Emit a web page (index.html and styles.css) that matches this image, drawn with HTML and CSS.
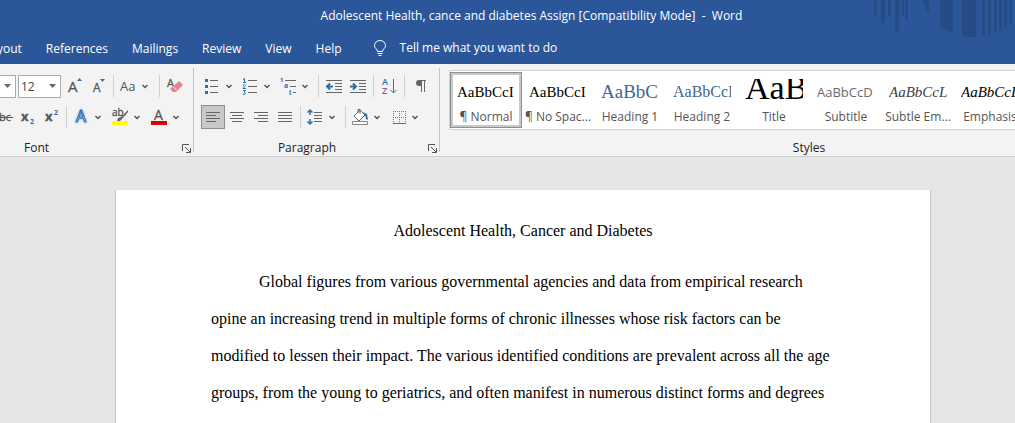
FILE: index.html
```html
<!DOCTYPE html>
<html lang="en">
<head>
  <meta charset="UTF-8">
  <meta name="viewport" content="width=device-width, initial-scale=1.0">
  <title>Adolescent Health, cance and diabetes Assign - Word</title>
  <link rel="stylesheet" href="styles.css">
</head>
<body>
  <header class="header">
    <svg class="header-art" width="144" height="40" viewBox="0 0 144 40" aria-hidden="true">
      <path d="M3 0h3v16H3zM10 0h4v23h-4zM17 0h3v16h-3zM24 0h4v31h-4zM31 0h2v16h-2zM34 0h3v20h-3z"/>
      <path d="M52 0h6v13q-4-5-6-13zM69 0h13v32q-8-1-13-6zM91 0h14v37h-10l-4-2z"/>
      <path d="M111 0h3v37h-3zM117 0h3v35h-3zM123 0h3v33h-3zM128 0h3v31h-3zM133 0h3v28h-3zM138 0h3v24h-3z"/>
    </svg>
    <div class="title">Adolescent Health, cance and diabetes Assign [Compatibility Mode]&nbsp; -&nbsp; Word</div>
    <nav class="tabs">
      <a href="#">Layout</a>
      <a href="#">References</a>
      <a href="#">Mailings</a>
      <a href="#">Review</a>
      <a href="#">View</a>
      <a href="#">Help</a>
      <a href="#" class="tell-me">
        <svg width="12" height="17" viewBox="0 0 12 17" fill="none" stroke="#fff"><path d="M3.5 11.5c0-2.500-3-3-3-6a5.500 5 0 0 1 11 0c0 3-3 3.500-3 6zM3.500 13.500h5M4.500 15.500h3"/></svg>
        Tell me what you want to do
      </a>
    </nav>
  </header>

  <main>
    <div class="ribbon">
      <section class="group font">
        <div class="tools">
          <div class="tool-row">
            <select class="font-name" aria-label="Font"><option>Times New</option></select>
            <select class="font-size" aria-label="Font size"><option>12</option></select>
            <button class="btn" aria-label="Increase font size">
              <svg width="20" height="20" viewBox="0 0 20 20"><text x="4" y="16" font-size="15" class="letter">A</text><path class="blue-fill" d="M13 5l2.500-3L18 5z"/></svg>
            </button>
            <button class="btn" aria-label="Decrease font size">
              <svg width="20" height="20" viewBox="0 0 20 20"><text x="5" y="16" font-size="12" class="letter">A</text><path class="blue-fill" d="M12 3h5l-2.500 3z"/></svg>
            </button>
            <span class="sep"></span>
            <button class="btn drop" aria-label="Change case">
              <svg width="18" height="20" viewBox="0 0 18 20"><text x="1" y="15" font-size="13" class="grey-fill">Aa</text></svg>
              <svg class="chevron" viewBox="0 0 8 5"><path d="M1.500 1L4 3.500 6.500 1"/></svg>
            </button>
            <span class="sep"></span>
            <button class="btn" aria-label="Clear formatting">
              <svg width="20" height="20" viewBox="0 0 20 20"><text x="2" y="11" font-size="11" class="letter">A</text><path fill="#e8808f" d="M14 5l4 4-7 7H8l-3-3z"/><path d="M8 10.500l4 4" stroke="#f3f3f3"/></svg>
            </button>
          </div>
          <div class="tool-row">
            <button class="btn" aria-label="Strikethrough">
              <svg width="22" height="20" viewBox="0 0 22 20"><text x="1" y="14" font-size="11" class="letter">abc</text><path d="M0 10.500h21" stroke="#555"/></svg>
            </button>
            <button class="btn" aria-label="Subscript">
              <svg width="20" height="20" viewBox="0 0 20 20"><text x="4" y="14" font-size="13" class="letter bold">x</text><text x="13" y="17" font-size="7" class="blue-fill bold">2</text></svg>
            </button>
            <button class="btn" aria-label="Superscript">
              <svg width="20" height="20" viewBox="0 0 20 20"><text x="4" y="14" font-size="13" class="letter bold">x</text><text x="13" y="8" font-size="7" class="blue-fill bold">2</text></svg>
            </button>
            <span class="sep"></span>
            <button class="btn drop" aria-label="Text effects">
              <svg width="18" height="20" viewBox="0 0 18 20"><text x="4" y="15" font-size="16" class="effect">A</text></svg>
              <svg class="chevron" viewBox="0 0 8 5"><path d="M1.500 1L4 3.500 6.500 1"/></svg>
            </button>
            <button class="btn drop" aria-label="Text highlight colour">
              <svg width="18" height="20" viewBox="0 0 18 20"><path d="M1 14h16v4H1z" fill="#ff0"/><text x="1" y="9" font-size="10" class="letter">ab</text><path d="M17 3l-7 7-3 1-1 3h3l2-2 6-7z" fill="#666"/></svg>
              <svg class="chevron" viewBox="0 0 8 5"><path d="M1.500 1L4 3.500 6.500 1"/></svg>
            </button>
            <button class="btn drop" aria-label="Font colour">
              <svg width="18" height="20" viewBox="0 0 18 20"><text x="4" y="13" font-size="14" class="letter">A</text><path d="M1 14h16v4H1z" fill="#e00000"/></svg>
              <svg class="chevron" viewBox="0 0 8 5"><path d="M1.500 1L4 3.500 6.500 1"/></svg>
            </button>
          </div>
        </div>
        <div class="group-footer">
          <span class="group-name">Font</span>
          <button class="launcher" aria-label="Font settings"><svg width="9" height="9" viewBox="0 0 9 9"><path d="M.5 7V.5H7M3 3l5 5M8.500 4v4.500H4"/></svg></button>
        </div>
      </section>

      <section class="group paragraph">
        <div class="tools">
          <div class="tool-row">
            <button class="btn drop" aria-label="Bullets">
              <svg width="18" height="20" viewBox="0 0 18 20"><path class="blue-fill" d="M2 3h3v3H2zM2 9h3v3H2zM2 15h3v3H2z"/><path class="line" d="M7 4.500h8M7 10.500h8M7 16.500h8"/></svg>
              <svg class="chevron" viewBox="0 0 8 5"><path d="M1.500 1L4 3.500 6.500 1"/></svg>
            </button>
            <button class="btn drop" aria-label="Numbering">
              <svg width="18" height="20" viewBox="0 0 18 20"><path class="digit" d="M2 3.500l1.500-1V7M2 6.500h3M2 9.500L3.500 8.500l1 1L2 12.500h3M2 14.500h2.500L3 16l1.500 1-1 1.500H2"/><path class="line" d="M7 4.500h9M7 10.500h9M7 16.500h9"/></svg>
              <svg class="chevron" viewBox="0 0 8 5"><path d="M1.500 1L4 3.500 6.500 1"/></svg>
            </button>
            <button class="btn drop" aria-label="Multilevel list">
              <svg width="18" height="20" viewBox="0 0 18 20"><text x="1" y="6" font-size="6" class="blue-fill bold">1</text><text x="5" y="12" font-size="7" class="blue-fill bold">a</text><text x="10" y="19" font-size="7" class="blue-fill bold">i</text><path class="line" d="M6 4.500h11M11 10.500h6M14 16.500h3"/></svg>
              <svg class="chevron" viewBox="0 0 8 5"><path d="M1.500 1L4 3.500 6.500 1"/></svg>
            </button>
            <span class="sep"></span>
            <button class="btn" aria-label="Decrease indent">
              <svg width="18" height="20" viewBox="0 0 18 20"><path class="line" d="M1 4.500h16M10 7.500h7M10 10.500h7M10 13.500h7M1 16.500h16"/><path d="M8 10.500H2M5 7.500l-3 3 3 3" fill="none" stroke="#2f6fa8" stroke-width="2"/></svg>
            </button>
            <button class="btn" aria-label="Increase indent">
              <svg width="18" height="20" viewBox="0 0 18 20"><path class="line" d="M1 4.500h16M10 7.500h7M10 10.500h7M10 13.500h7M1 16.500h16"/><path d="M1 10.500h6M4 7.500l3 3-3 3" fill="none" stroke="#2f6fa8" stroke-width="2"/></svg>
            </button>
            <span class="sep"></span>
            <button class="btn" aria-label="Sort">
              <svg width="18" height="20" viewBox="0 0 18 20"><text x="2" y="9" font-size="9" class="sort-a">A</text><text x="2" y="18" font-size="9" class="sort-z">Z</text><path class="line" fill="none" d="M13.500 3v14M10.500 14l3 3 3-3"/></svg>
            </button>
            <span class="sep"></span>
            <button class="btn" aria-label="Show paragraph marks">
              <svg width="18" height="20" viewBox="0 0 18 20"><path d="M8 4h7v1h-1v11h-1V5h-2v11h-1v-6H8a3 3 0 0 1 0-6z" fill="#666"/></svg>
            </button>
          </div>
          <div class="tool-row">
            <button class="btn selected" aria-label="Align left">
              <svg width="18" height="20" viewBox="0 0 18 20"><path class="line" d="M2 5.500h14M2 8.500h10M2 11.500h14M2 14.500h10"/></svg>
            </button>
            <button class="btn" aria-label="Centre">
              <svg width="18" height="20" viewBox="0 0 18 20"><path class="line" d="M2 5.500h14M4 8.500h10M2 11.500h14M4 14.500h10"/></svg>
            </button>
            <button class="btn" aria-label="Align right">
              <svg width="18" height="20" viewBox="0 0 18 20"><path class="line" d="M2 5.500h14M6 8.500h10M2 11.500h14M6 14.500h10"/></svg>
            </button>
            <button class="btn" aria-label="Justify">
              <svg width="18" height="20" viewBox="0 0 18 20"><path class="line" d="M2 5.500h14M2 8.500h14M2 11.500h14M2 14.500h14"/></svg>
            </button>
            <span class="sep"></span>
            <button class="btn drop" aria-label="Line spacing">
              <svg width="18" height="20" viewBox="0 0 18 20"><path d="M4 3v5M1.500 5.500L4 3l2.500 2.500M4 17v-5M1.500 14.500L4 17l2.500-2.500" fill="none" stroke="#2f6fa8" stroke-width="1.500"/><path class="line" d="M8 5.500h8M8 8.500h8M8 11.500h8M8 14.500h8"/></svg>
              <svg class="chevron" viewBox="0 0 8 5"><path d="M1.500 1L4 3.500 6.500 1"/></svg>
            </button>
            <span class="sep"></span>
            <button class="btn drop" aria-label="Shading">
              <svg width="18" height="20" viewBox="0 0 18 20"><path d="M3 9l6-6 5 5-6 6zM7 6V2.500h2V7" fill="#fff" stroke="#666"/><path class="blue-fill" d="M12 5l4 2 1 6-2-1-1-4z"/><path d="M1.500 14.500h15v3h-15z" fill="#fff" stroke="#888"/></svg>
              <svg class="chevron" viewBox="0 0 8 5"><path d="M1.500 1L4 3.500 6.500 1"/></svg>
            </button>
            <button class="btn drop" aria-label="Borders">
              <svg width="18" height="20" viewBox="0 0 18 20"><path d="M4 4.500h13M4 10.500h13M4.500 4v12M10.500 4v12M16.500 4v12" stroke="#777" stroke-dasharray="1 1"/><path class="line" d="M4 16.500h13"/></svg>
              <svg class="chevron" viewBox="0 0 8 5"><path d="M1.500 1L4 3.500 6.500 1"/></svg>
            </button>
          </div>
        </div>
        <div class="group-footer">
          <span class="group-name">Paragraph</span>
          <button class="launcher" aria-label="Paragraph settings"><svg width="9" height="9" viewBox="0 0 9 9"><path d="M.5 7V.5H7M3 3l5 5M8.500 4v4.500H4"/></svg></button>
        </div>
      </section>

      <section class="group styles">
        <div class="gallery">
          <button class="style active"><span class="preview">AaBbCcI</span><span class="style-name">¶ Normal</span></button>
          <button class="style"><span class="preview">AaBbCcI</span><span class="style-name">¶ No Spac...</span></button>
          <button class="style"><span class="preview heading1">AaBbC</span><span class="style-name">Heading 1</span></button>
          <button class="style"><span class="preview heading2">AaBbCcI</span><span class="style-name">Heading 2</span></button>
          <button class="style"><span class="preview title-style">AaB</span><span class="style-name">Title</span></button>
          <button class="style"><span class="preview subtitle">AaBbCcD</span><span class="style-name">Subtitle</span></button>
          <button class="style"><span class="preview subtle">AaBbCcL</span><span class="style-name">Subtle Em...</span></button>
          <button class="style"><span class="preview emphasis">AaBbCcL</span><span class="style-name">Emphasis</span></button>
        </div>
        <div class="group-footer">
          <span class="group-name">Styles</span>
          <span class="launcher"></span>
        </div>
      </section>
    </div>

    <div class="workspace">
      <article class="page">
        <h1>Adolescent Health, Cancer and Diabetes</h1>
        <p>Global figures from various governmental agencies and data from empirical research opine an increasing trend in multiple forms of chronic illnesses whose risk factors can be modified to lessen their impact. The various identified conditions are prevalent across all the age groups, from the young to geriatrics, and often manifest in numerous distinct forms and degrees</p>
      </article>
    </div>
  </main>
</body>
</html>
```
FILE: styles.css
```css
* {
  box-sizing: border-box;
}
body {
  margin: 0;
  min-height: 100vh;
  display: flex;
  flex-direction: column;
  background-color: #e6e6e6;
  font-family: "Open Sans", "Noto Sans", sans-serif;
  font-size: 12px;
  color: #222;
}
main {
  flex: 1;
  display: flex;
  flex-direction: column;
}
button, select {
  font-family: inherit;
  font-size: 12px;
  color: #444;
}
svg {
  display: block;
  flex: none;
}

/* title bar and tabs */
.header {
  position: relative;
  background-color: #2b579a;
  color: #fff;
  overflow: hidden;
}
.header-art {
  position: absolute;
  top: 0;
  right: 0;
  fill: #264c85;
}
.title {
  height: 32px;
  line-height: 32px;
  padding-left: 48px;
  text-align: center;
  white-space: nowrap;
}
.tabs {
  display: flex;
  gap: 24px;
  height: 32px;
  margin-left: -16px;
  line-height: 34px;
  white-space: nowrap;
}
.tabs a {
  color: #fff;
  text-decoration: none;
}
.tabs .tell-me {
  display: flex;
  align-items: center;
  gap: 14px;
  margin-left: 8px;
}

/* ribbon */
.ribbon {
  display: flex;
  padding-top: 4px;
  background-color: #f3f3f3;
  border-bottom: 1px solid #cfcfcf;
  overflow: hidden;
}
.group {
  flex: none;
  display: flex;
  flex-direction: column;
  justify-content: space-between;
  height: 88px;
  background: linear-gradient(#c4c4c4, #c4c4c4) no-repeat right top / 1px 84px;
}
.font {
  width: 295px;
  margin-left: -101px;
}
.paragraph {
  width: 246px;
}
.styles {
  width: 758px;
}
.tools {
  display: flex;
  flex-direction: column;
  gap: 7px;
  padding: 6px 7px 0;
}
.font .tool-row {
  justify-content: flex-end;
}
.tool-row {
  display: flex;
  align-items: center;
  height: 24px;
}
.btn {
  display: flex;
  align-items: center;
  justify-content: center;
  flex: none;
  width: 24px;
  height: 24px;
  padding: 0;
  border: none;
  background: none;
}
.btn.drop {
  width: 39px;
  gap: 4px;
  justify-content: flex-start;
  padding-left: 2px;
}
.paragraph .btn.drop {
  width: 38px;
}
.btn.selected {
  background-color: #c8c8c8;
  border: 1px solid #8f8f8f;
}
.chevron {
  width: 8px;
  height: 5px;
  fill: none;
  stroke: #555;
  stroke-width: 1.5px;
}
.sep {
  width: 1px;
  height: 22px;
  margin: 0 3px;
  background-color: #d0d0d0;
}
select {
  appearance: none;
  flex: none;
  height: 23px;
  padding: 0 2px;
  border: 1px solid #ababab;
  border-radius: 0;
  background: #fff url("data:image/svg+xml,%3Csvg xmlns='http://www.w3.org/2000/svg' width='7' height='4'%3E%3Cpath d='M0 0h7L3.500 4z' fill='%23666'/%3E%3C/svg%3E") no-repeat right 4px center;
}
.font-name {
  width: 104px;
  margin-right: 2px;
}
.font-size {
  width: 43px;
  margin-right: 1px;
}
.letter {
  fill: #555;
  stroke: #555;
  stroke-width: 0.3px;
}
.effect {
  fill: #fff;
  stroke: #3a72b0;
  filter: drop-shadow(0 0 1px #6fa8dc);
}
.grey-fill {
  fill: #555;
}
.blue-fill {
  fill: #2f6fa8;
}
.sort-a {
  fill: #2f6fa8;
  font-weight: 600;
}
.sort-z {
  fill: #8a55b5;
  font-weight: 600;
}
.digit {
  fill: none;
  stroke: #2f6fa8;
}
.bold {
  font-weight: bold;
}
.line {
  stroke: #666;
}
.group-footer {
  display: flex;
  align-items: center;
  height: 16px;
}
.group-name {
  flex: 1;
  line-height: 16px;
  text-align: center;
}
.launcher {
  width: 20px;
  padding: 0 0 0 8px;
  border: none;
  background: none;
}
.launcher svg {
  fill: none;
  stroke: #555;
}

/* styles gallery */
.gallery {
  display: flex;
  height: 60px;
  margin: 2px 20px 0 9px;
  border: 1px solid #d0d0d0;
  background-color: #fff;
}
.style {
  flex: none;
  display: flex;
  flex-direction: column;
  align-items: center;
  justify-content: flex-start;
  width: 72px;
  padding: 8px 7px 0;
  border: none;
  background: none;
}
.style.active {
  height: 56px;
  margin-top: 1px;
  padding-top: 6px;
  border: 1px solid #8f8f8f;
  box-shadow: inset 0 0 0 2px #c8c8c8;
}
.preview {
  flex: none;
  width: 58px;
  height: 24px;
  overflow: hidden;
  font-family: "Liberation Serif", serif;
  font-size: 15px;
  line-height: 26px;
  text-align: left;
  white-space: nowrap;
  color: #000;
}
.style-name {
  margin-top: 5px;
  line-height: 18px;
  white-space: nowrap;
  color: #555;
}
.preview.heading1 {
  font-size: 19px;
  color: #44678f;
}
.preview.heading2 {
  font-size: 16px;
  color: #44678f;
}
.preview.title-style {
  font-size: 34px;
  line-height: 17px;
}
.preview.subtitle {
  font-family: "Open Sans", sans-serif;
  font-size: 13px;
  color: #6a6a6a;
}
.preview.subtle {
  font-style: italic;
  color: #404040;
}
.preview.emphasis {
  font-style: italic;
}

/* document */
.workspace {
  flex: 1;
  display: flex;
  justify-content: center;
  padding: 33px 0 0 31px;
}
.page {
  width: 816px;
  padding: 22px 95px 0;
  border: 1px solid #c6c6c6;
  border-width: 0 1px;
  background-color: #fff;
  font-family: "Liberation Serif", serif;
  font-size: 16px;
  line-height: 37px;
  color: #000;
}
.page h1 {
  margin: 0 0 14px;
  font-size: 16px;
  font-weight: normal;
  text-align: center;
}
.page p {
  margin: 0;
  text-indent: 48px;
}
```
